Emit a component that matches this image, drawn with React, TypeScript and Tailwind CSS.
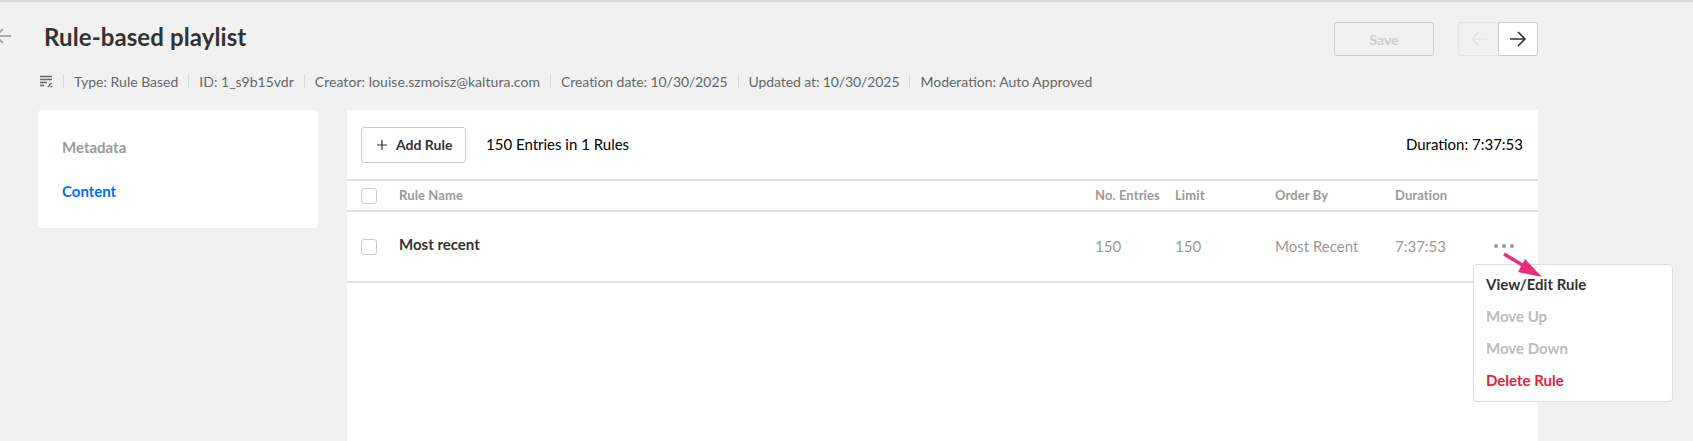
import React from "react";

const Sep = () => <span className="w-px h-[14px] bg-[#d9dbe3] mx-[10px] shrink-0" />;

const Arrow = ({ left, color, width = 1.6 }: { left?: boolean; color: string; width?: number }) => (
  <svg width="18" height="16" viewBox="0 0 18 16" fill="none" stroke={color} strokeWidth={width} className={left ? "" : "rotate-180"}>
    <path d="M17 8H2M9 1L2 8l7 7" />
  </svg>
);

const Check = () => <span className="block w-4 h-4 rounded-[3px] border border-[#cccccc] bg-white shrink-0" />;

export default function App() {
  return (
    <div className="relative w-[1693px] h-[441px] overflow-hidden bg-[#f1f1f1] border-t-2 border-[#d9d9d9] text-[#333333] font-['Lato','Liberation_Sans',sans-serif]">
      <div className="flex items-center h-[34px] mt-[20px] w-[1538px]">
        <div className="w-[44px] shrink-0 -ml-[6px] mr-[6px] -mt-[6px]">
          <Arrow left color="#999999" />
        </div>
        <h1 className="text-[24px] leading-[34px] tracking-[0.1px] font-bold text-[#333333] -mt-[4px]">Rule-based playlist</h1>
        <div className="ml-auto flex items-center">
          <button className="w-[100px] h-[34px] rounded-[3px] border border-[#cccccc] text-[14px] font-bold text-[#cccccc]">Save</button>
          <div className="flex ml-6">
            <span className="w-10 h-[34px] flex items-center justify-center rounded-l-[3px] border border-r-0 border-[#e3e3e3]">
              <Arrow left color="#e3e3e3" />
            </span>
            <span className="w-10 h-[34px] flex items-center justify-center rounded-r-[3px] border border-[#cccccc] bg-white">
              <Arrow color="#333333" />
            </span>
          </div>
        </div>
      </div>

      <div className="flex items-center h-5 mt-[15px] ml-[39px] text-[14px] text-[#666666]">
        <svg width="14" height="14" viewBox="0 0 14 14" fill="none" stroke="#666666" strokeWidth="1.3">
          <path d="M1 2.5h12M1 5.5h12M1 8.5h7M1 11.5h4" />
          <path d="M8.5 12.5c1 .5 1.6-.3 2-1.3s1-2 2.2-1.3M11.5 12.7c.7.2 1.3-.2 1.5-.8" />
        </svg>
        <Sep />
        <span className="whitespace-nowrap">Type: Rule Based</span>
        <Sep />
        <span className="whitespace-nowrap">ID: 1_s9b15vdr</span>
        <Sep />
        <span className="whitespace-nowrap tracking-[0.05px]">Creator: louise.szmoisz@kaltura.com</span>
        <Sep />
        <span className="whitespace-nowrap tracking-[-0.05px]">Creation date: 10/30/2025</span>
        <Sep />
        <span className="whitespace-nowrap tracking-[-0.1px]">Updated at: 10/30/2025</span>
        <Sep />
        <span className="whitespace-nowrap">Moderation: Auto Approved</span>
      </div>

      <div className="flex items-start mt-[19px] ml-[38px] w-[1500px]">
        <nav className="w-[280px] h-[118px] shrink-0 bg-white rounded-[4px] pl-6 pt-[26px] text-[15px] font-bold">
          <div className="leading-[22px] text-[#999999]">Metadata</div>
          <div className="leading-[22px] mt-[22px] text-[#006efa]">Content</div>
        </nav>

        <main className="ml-[29px] w-[1191px] h-[340px] shrink-0 bg-white">
          <div className="flex items-center h-[71px] pl-[14px] pr-[15px] border-b-2 border-[#e0e0e0]">
            <button className="flex items-center w-[105px] h-[36px] pl-[14px] rounded-[3px] border border-[#cccccc] text-[14px] font-bold text-[#333333]">
              <svg width="12" height="12" viewBox="0 0 12 12" stroke="#333333" strokeWidth="1.2" className="mr-[8px]">
                <path d="M6 1v10M1 6h10" />
              </svg>
              Add Rule
            </button>
            <span className="ml-5 text-[15px] text-black">150 Entries in 1 Rules</span>
            <span className="ml-auto text-[15px] text-black">Duration: 7:37:53</span>
          </div>

          <div className="flex items-center h-[31px] pl-[14px] border-b-2 border-[#e0e0e0] text-[13px] tracking-[0.1px] font-bold text-[#999999]">
            <Check />
            <span className="ml-[22px] w-[696px]">Rule Name</span>
            <span className="w-[80px]">No. Entries</span>
            <span className="w-[100px]">Limit</span>
            <span className="w-[120px]">Order By</span>
            <span>Duration</span>
          </div>

          <div className="flex items-center h-[71px] pl-[14px] border-b-2 border-[#e0e0e0] text-[15px] text-[#999999]">
            <Check />
            <span className="ml-[22px] w-[696px] -translate-y-[2px] font-bold text-[#333333]">Most recent</span>
            <span className="w-[80px]">150</span>
            <span className="w-[100px]">150</span>
            <span className="w-[120px]">Most Recent</span>
            <span className="w-[99px]">7:37:53</span>
            <span className="flex gap-[4px] -translate-y-[1px]">
              <span className="w-[4px] h-[4px] rounded-full bg-[#999999]" />
              <span className="w-[4px] h-[4px] rounded-full bg-[#999999]" />
              <span className="w-[4px] h-[4px] rounded-full bg-[#999999]" />
            </span>
          </div>
        </main>
      </div>

      <div className="absolute left-[1473px] top-[262px] w-[200px] h-[138px] py-[3px] bg-white rounded-[4px] border border-[#dddddd] text-[15px] font-bold">
        <div className="h-8 leading-8 pl-[12px] text-[#333333]">View/Edit Rule</div>
        <div className="h-8 leading-8 pl-[12px] text-[#bbbbbb]">Move Up</div>
        <div className="h-8 leading-8 pl-[12px] text-[#bbbbbb]">Move Down</div>
        <div className="h-8 leading-8 pl-[12px] text-[#e12237]">Delete Rule</div>
      </div>

      <svg className="absolute left-[1500px] top-[250px]" width="46" height="30" viewBox="0 0 46 30">
        <path d="M4 2L24 14" stroke="#ee2b7b" strokeWidth="3.5" />
        <path d="M42 25L18 20 L25 7Z" fill="#ee2b7b" />
      </svg>
    </div>
  );
}
